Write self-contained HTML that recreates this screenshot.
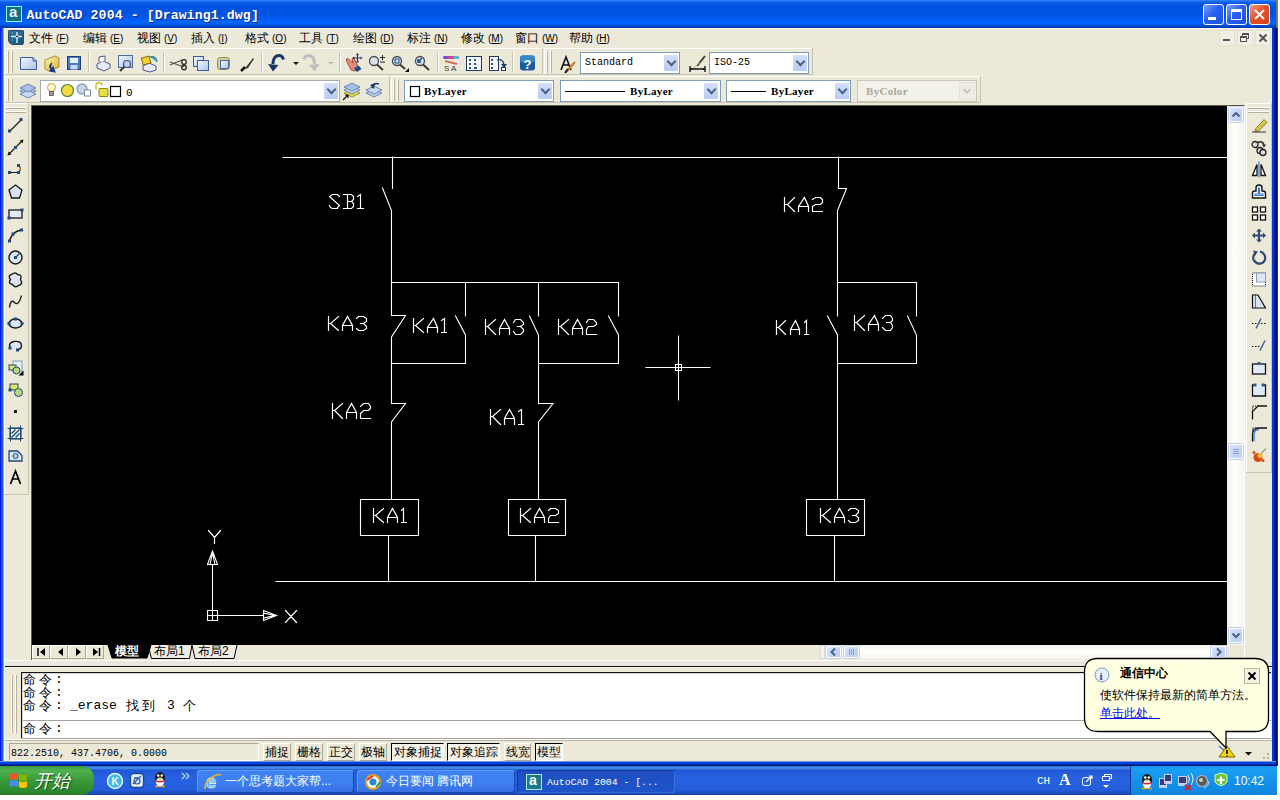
<!DOCTYPE html>
<html><head><meta charset="utf-8"><title>AutoCAD 2004</title>
<style>
*{margin:0;padding:0;box-sizing:border-box}
html,body{width:1280px;height:800px;overflow:hidden;background:#fff;font-family:"Liberation Sans",sans-serif}
.a{position:absolute}
#win{left:0;top:0;width:1276px;height:766px;background:#0040D8}
#title{left:0;top:0;width:1276px;height:28px;background:linear-gradient(#3B8EFF 0px,#1D6FF6 1px,#0A5AE8 3px,#0054E3 6px,#0054E3 14px,#005AF0 18px,#0064FD 22px,#0062F8 24px,#0050D8 25.5px,#003BB4 27px,#003BB4 28px)}
#ttext{left:26.5px;top:8px;font:bold 13.2px/16px "Liberation Mono",monospace;color:#fff;text-shadow:1px 1px 0 #0A2A8A;letter-spacing:0.1px;white-space:pre}
.tbtn{top:4px;width:21px;height:21px;border:1px solid #fff;border-radius:3px;background:linear-gradient(135deg,#7AA2FF,#2A60F0 45%,#1B4FE6)}
#client{left:5px;top:28px;width:1267px;height:733px;background:#ECE9D8}
.menu{top:32px;font:12px/13px "Liberation Sans",sans-serif;color:#000;white-space:pre}
.tb{background:#ECE9D8;border-right:1px solid #C8C4B2;border-bottom:1px solid #C8C4B2;box-shadow:inset 1px 1px 0 #fff}
.grip{width:2px;border-left:1px solid #fff;border-right:1px solid #B6B19C}
.sep{width:2px;border-left:1px solid #C5C2B2;border-right:1px solid #fff}
.combo{background:#fff;border:1px solid #7F9DB9}
.cbtn{background:linear-gradient(#D3DFFB,#B9CCF7);border:1px solid #fff;border-radius:2px}
.cbtn::after{content:"";position:absolute;left:4px;top:3px;width:5px;height:5px;border-right:2px solid #4D6185;border-bottom:2px solid #4D6185;transform:rotate(45deg)}
.ctext{font:10px/12px "Liberation Mono",monospace;color:#000;white-space:pre}
.bl{font:bold 11px/12px "Liberation Serif",serif;letter-spacing:0.3px}
#draw{left:32px;top:106px;width:1195px;height:539px;background:#000}
.sb{background:#F7F6F0}
.sbb{background:linear-gradient(135deg,#D8E3FC,#B8CBF6);border:1px solid #fff;border-radius:2px;box-shadow:0 0 0 1px #C2CFEA}
.st{top:743px;height:18px;font:12px/16px "Liberation Sans",sans-serif;text-align:center;border:1px solid;border-color:#fff #ACA899 #ACA899 #fff;background:#ECE9D8}
.stp{border-color:#000 #fff #fff #000;background:#F3F2EA}
.cmd{font:13px/13px "Liberation Mono",monospace;color:#000;white-space:pre}
.cmdc{font:13px/13px "Liberation Sans",sans-serif;letter-spacing:3px;color:#000;white-space:pre}
#taskbar{left:0;top:766px;width:1277px;height:29px;background:linear-gradient(#3168D5 0,#4993E6 2px,#2157D7 4px,#2663E0 12px,#245DDB 24px,#1941A5 29px)}
.tk{top:770px;height:23px;border-radius:3px;background:linear-gradient(#3C81F3,#3F80F0 50%,#376FE0);box-shadow:inset 1px 1px 0 #5C9BFF,inset -1px -1px 0 #1B44B5;font:12px/23px "Liberation Sans",sans-serif;color:#fff;white-space:pre}
</style></head><body>
<div id="win" class="a"></div>
<div class="a" style="left:0;top:28px;width:5px;height:738px;background:linear-gradient(90deg,#0018C8 0,#0028D8 1px,#2262FF 2px,#1452D8 3px,#F4F8FF 4px)"></div>
<div class="a" style="left:1272px;top:28px;width:6px;height:738px;background:linear-gradient(90deg,#0838DC 0,#0838DC 1.5px,#0020A0 2.5px,#001888 3.5px,#000C50 5px,#5A6070 6px)"></div>
<div class="a" style="left:1276px;top:0;width:2px;height:28px;background:linear-gradient(90deg,#5A7040,#8A9A40)"></div>
<div class="a" style="left:0;top:761px;width:1276px;height:5px;background:linear-gradient(#D8E0F4 0,#0044DC 1px,#0040D8 3px,#001A80 4px,#001870 5px)"></div>
<div id="title" class="a"></div>
<!-- title icon -->
<div class="a" style="left:6px;top:6px;width:16px;height:16px;background:#0E6F86;border:1px solid #9FF0FF"></div>
<div class="a" style="left:9px;top:4px;font:bold 15px/16px 'Liberation Sans',sans-serif;color:#E6F6FA">a</div>
<div id="ttext" class="a">AutoCAD 2004 - [Drawing1.dwg]</div>
<div class="a tbtn" style="left:1203px"></div>
<div class="a tbtn" style="left:1226px"></div>
<div class="a tbtn" style="left:1249px;background:linear-gradient(135deg,#F29A7A,#E0512A 50%,#D23F12)"></div>
<div class="a" style="left:1208px;top:17px;width:8px;height:3px;background:#fff"></div>
<div class="a" style="left:1231px;top:9px;width:11px;height:11px;border:1px solid #fff;border-top-width:3px"></div>
<svg class="a" style="left:1249px;top:4px" width="21" height="21"><path d="M6,6 L15,15 M15,6 L6,15" stroke="#fff" stroke-width="2"/></svg>
<div id="client" class="a"></div>
<div class="a" style="left:5px;top:28px;width:1267px;height:1px;background:#FAFAF6"></div>
<div class="a" style="left:8px;top:30px;width:16px;height:15px;background:linear-gradient(135deg,#2A78A8,#15507A);border:1px solid #3A4A5A;border-radius:1px 1px 2px 5px"></div>
<svg class="a" style="left:8px;top:30px" width="16" height="15"><path d="M9,2 V13 M3,6.5 H14" stroke="#D8F4FF" stroke-width="1.4"/><circle cx="9" cy="6.5" r="1.4" fill="#111" stroke="#fff" stroke-width="0.8"/><path d="M4,3 h1 M4,10 h1 M12,3 h1" stroke="#7AB8D8"/></svg>
<div class="a menu" style="left:29px">文件<span style="font:10px/13px 'Liberation Sans',sans-serif;margin-left:3px">(<u>F</u>)</span></div>
<div class="a menu" style="left:83px">编辑<span style="font:10px/13px 'Liberation Sans',sans-serif;margin-left:3px">(<u>E</u>)</span></div>
<div class="a menu" style="left:137px">视图<span style="font:10px/13px 'Liberation Sans',sans-serif;margin-left:3px">(<u>V</u>)</span></div>
<div class="a menu" style="left:191px">插入<span style="font:10px/13px 'Liberation Sans',sans-serif;margin-left:3px">(<u>I</u>)</span></div>
<div class="a menu" style="left:245px">格式<span style="font:10px/13px 'Liberation Sans',sans-serif;margin-left:3px">(<u>O</u>)</span></div>
<div class="a menu" style="left:299px">工具<span style="font:10px/13px 'Liberation Sans',sans-serif;margin-left:3px">(<u>T</u>)</span></div>
<div class="a menu" style="left:353px">绘图<span style="font:10px/13px 'Liberation Sans',sans-serif;margin-left:3px">(<u>D</u>)</span></div>
<div class="a menu" style="left:407px">标注<span style="font:10px/13px 'Liberation Sans',sans-serif;margin-left:3px">(<u>N</u>)</span></div>
<div class="a menu" style="left:461px">修改<span style="font:10px/13px 'Liberation Sans',sans-serif;margin-left:3px">(<u>M</u>)</span></div>
<div class="a menu" style="left:515px">窗口<span style="font:10px/13px 'Liberation Sans',sans-serif;margin-left:3px">(<u>W</u>)</span></div>
<div class="a menu" style="left:569px">帮助<span style="font:10px/13px 'Liberation Sans',sans-serif;margin-left:3px">(<u>H</u>)</span></div>
<div class="a" style="left:1219px;top:30px;width:16px;height:16px;background:#F1EFE6;border:1px solid #E4E1D6"></div>
<div class="a" style="left:1237px;top:30px;width:16px;height:16px;background:#F1EFE6;border:1px solid #E4E1D6"></div>
<div class="a" style="left:1255px;top:30px;width:16px;height:16px;background:#F1EFE6;border:1px solid #E4E1D6"></div>
<div class="a" style="left:1223px;top:39px;width:7px;height:2px;background:#555"></div>
<div class="a" style="left:1242px;top:33px;width:7px;height:6px;border:1px solid #555;border-top-width:2px"></div>
<div class="a" style="left:1240px;top:36px;width:7px;height:6px;border:1px solid #555;border-top-width:2px;background:#F1EFE6"></div>
<svg class="a" style="left:1255px;top:30px" width="16" height="16"><path d="M4.5,4.5 L11.5,11.5 M11.5,4.5 L4.5,11.5" stroke="#555" stroke-width="2"/></svg>
<!-- toolbar frames -->
<div class="a tb" style="left:5px;top:48px;width:538px;height:27px"></div>
<div class="a tb" style="left:544px;top:48px;width:269px;height:27px"></div>
<div class="a tb" style="left:5px;top:76px;width:385px;height:27px"></div>
<div class="a tb" style="left:391px;top:76px;width:590px;height:27px"></div>
<div class="a grip" style="left:7px;top:51px;height:22px"></div><div class="a grip" style="left:11px;top:51px;height:22px"></div>
<div class="a grip" style="left:546px;top:51px;height:22px"></div><div class="a grip" style="left:550px;top:51px;height:22px"></div>
<div class="a grip" style="left:7px;top:79px;height:22px"></div><div class="a grip" style="left:11px;top:79px;height:22px"></div>
<div class="a grip" style="left:393px;top:79px;height:22px"></div><div class="a grip" style="left:397px;top:79px;height:22px"></div>
<div class="a sep" style="left:88px;top:52px;height:20px"></div>
<div class="a sep" style="left:163px;top:52px;height:20px"></div>
<div class="a sep" style="left:261px;top:52px;height:20px"></div>
<div class="a sep" style="left:339px;top:52px;height:20px"></div>
<div class="a sep" style="left:437px;top:52px;height:20px"></div>
<div class="a sep" style="left:512px;top:52px;height:20px"></div>
<!-- standard toolbar icons -->
<svg class="a" style="left:0;top:48px" width="813" height="28" viewBox="0 48 813 28">
<defs>
<linearGradient id="gb" x1="0" y1="0" x2="1" y2="1"><stop offset="0" stop-color="#F4F8FF"/><stop offset="1" stop-color="#A9C3E6"/></linearGradient>
<linearGradient id="gy" x1="0" y1="0" x2="1" y2="1"><stop offset="0" stop-color="#FFF3A8"/><stop offset="1" stop-color="#D8B43A"/></linearGradient>
</defs>
<!-- new -->
<path d="M20.5,57.5 H33 L36.5,61 V69.5 H20.5 Z" fill="url(#gb)" stroke="#3B5C9A"/>
<path d="M33,57.5 V61 H36.5" fill="none" stroke="#3B5C9A"/>
<!-- open -->
<path d="M45,60 L55,56 L59,58 V67 L49,71 L45,69 Z" fill="url(#gy)" stroke="#A88D3A"/>
<path d="M52,63 Q48,66 51,69 L53,67 L55,72 L50,71 L51,69" fill="#1E3C8C" stroke="#1E3C8C" stroke-width="1.2"/>
<!-- save -->
<rect x="67.5" y="56.5" width="13" height="13" fill="#4C7BC4" stroke="#1F3D7A"/>
<rect x="70" y="58" width="8" height="5" fill="#E8F0FA"/>
<rect x="70.5" y="65" width="7" height="4.5" fill="#C9D8EE"/>
<!-- print -->
<path d="M97,64 L103,61 L110,64 V68 L104,71 L97,68 Z" fill="#E6EAF4" stroke="#4A5A8A"/>
<path d="M99,62 V57 L105,56 V61" fill="#fff" stroke="#4A5A8A"/>
<!-- preview -->
<rect x="118.5" y="55.5" width="14" height="12" fill="url(#gb)" stroke="#4A6AA0"/>
<circle cx="127" cy="64" r="3.5" fill="#B8D0EE" stroke="#4A5A7A" stroke-width="1.2"/>
<path d="M124.5,66.5 L120,71" stroke="#3A3A3A" stroke-width="2"/>
<!-- publish -->
<path d="M143,66 L149,63 L156,66 V70 L150,72 L143,70 Z" fill="#E6EAF4" stroke="#4A5A8A"/>
<rect x="142" y="57" width="8" height="7" fill="#F5D22A" stroke="#8A6A10" transform="rotate(-15 146 60)"/>
<path d="M150,57 Q156,55 157,62" fill="#3FA7C8" stroke="#1E6A8A"/>
<!-- cut -->
<path d="M170,62 L184,67 M170,65 L182,60" stroke="#555" stroke-width="1.2"/>
<circle cx="184" cy="62" r="2.3" fill="none" stroke="#222" stroke-width="1.2"/><circle cx="184" cy="67.5" r="2.3" fill="none" stroke="#222" stroke-width="1.2"/>
<!-- copy -->
<rect x="193.5" y="56.5" width="10" height="10" fill="url(#gb)" stroke="#3B5C9A"/>
<rect x="197.5" y="60.5" width="11" height="10" fill="url(#gb)" stroke="#3B5C9A"/>
<!-- paste -->
<rect x="217.5" y="57.5" width="12" height="12" rx="3" fill="#D8D0A0" stroke="#8C8A4A"/>
<rect x="220.5" y="60.5" width="8" height="8" fill="url(#gb)" stroke="#4C6A9A"/>
<!-- match prop brush -->
<path d="M242,70 L246,67 L253,58 L254,59 L248,68 Z" fill="#3A3A3A"/>
<path d="M241,71 L245,67" stroke="#111" stroke-width="2.5"/>
<!-- undo -->
<path d="M283.5,59.5 Q282,54 276.5,56 Q273,58 273,64" fill="none" stroke="#1A3468" stroke-width="3"/>
<path d="M268,64 L278.5,65 L273,71.5 Z" fill="#1A3468"/>
<path d="M293,62 H299 L296,65 Z" fill="#111"/>
<!-- redo -->
<path d="M304,59.5 Q305.5,54 311,56 Q314.5,58 314.5,64" fill="none" stroke="#BDBDBD" stroke-width="3"/>
<path d="M309,65 L319.5,64 L314.5,71.5 Z" fill="#BDBDBD"/>
<path d="M328,62 H334 L331,65 Z" fill="#BBB"/>
<!-- pan -->
<path d="M346.5,61 Q346,58 348,58.5 L353,63 L352,59 Q352,57.5 353.5,58 L357,64 L358,68 L355,71 L351,70 Z" fill="#E08C78" stroke="#A04A3A" stroke-width="0.9"/>
<path d="M354,68.5 L358.5,65.5 L361.5,69 L357,72 Z" fill="#1E4A8A"/>
<path d="M357.5,54 V62 M353.5,58 H361.5" stroke="#1E3A6A" stroke-width="1.2"/>
<path d="M357.5,53 L356,55 H359Z M357.5,63 L356,61 H359Z M352.5,58 L354.5,56.5 V59.5Z M362.5,58 L360.5,56.5 V59.5Z" fill="#1E3A6A"/>
<!-- zoom realtime -->
<circle cx="374" cy="61" r="4.5" fill="#D6E4F2" stroke="#4A4A4A" stroke-width="1.3"/>
<path d="M377,64.5 L383,70" stroke="#3A3A3A" stroke-width="2"/>
<path d="M380,57.5 H385 M382.5,55 V60 M380,62 H385" stroke="#222" stroke-width="1"/>
<!-- zoom window -->
<circle cx="397" cy="61" r="4.5" fill="#CFE0F0" stroke="#4A4A4A" stroke-width="1.3"/>
<rect x="395" y="59" width="4" height="4" fill="none" stroke="#1E4A8A"/>
<path d="M400,64.5 L405,69" stroke="#3A3A3A" stroke-width="2"/><path d="M405,72 L409,68 V72 Z" fill="#000"/>
<!-- zoom prev -->
<circle cx="420" cy="61" r="4.5" fill="#CFE0F0" stroke="#4A4A4A" stroke-width="1.3"/>
<path d="M418,62 L422,58 M418,59 V62 H421" stroke="#1E3C8C" stroke-width="1.4" fill="none"/>
<path d="M423,64.5 L429,70" stroke="#3A3A3A" stroke-width="2"/>
<!-- properties -->
<rect x="443.5" y="56" width="15" height="3" fill="#E0407A"/><rect x="443.5" y="56" width="5" height="3" fill="#7A4AE0"/><rect x="453.5" y="56" width="5" height="3" fill="#40C0E0"/>
<path d="M445,61 L457,64" stroke="#D27060" stroke-width="2"/>
<text x="444" y="71" font-family="Liberation Sans" font-size="8" fill="#333">S A</text>
<!-- design center -->
<rect x="466.5" y="56.5" width="15" height="14" fill="#F6F8FC" stroke="#1F3A6A"/>
<path d="M469,59 h2 v2 h-2z M474,59 h2 v2 h-2z M469,63 h2 v2 h-2z M474,63 h2 v2 h-2z M469,67 h2 v2 h-2z M474,67 h3 v2 h-3z" fill="#2E4E8A"/>
<!-- tool palettes -->
<rect x="489.5" y="56.5" width="9" height="14" fill="#F6F8FC" stroke="#1F3A6A"/>
<path d="M491,59 h2 v2 h-2z M491,63 h2 v2 h-2z M491,67 h2 v2 h-2z" fill="#2E4E8A"/>
<path d="M497,60 Q503,58 504,65" fill="none" stroke="#1F3A6A" stroke-width="1.3"/><path d="M501,64 H507 L504,68 Z" fill="#1F3A6A"/>
<rect x="501.5" y="67.5" width="4" height="3" fill="#fff" stroke="#1F3A6A"/>
<!-- help -->
<rect x="520" y="55.5" width="15" height="15" rx="3" fill="#1E5A9E"/>
<rect x="520" y="55.5" width="15" height="7" rx="3" fill="#3A84C8"/>
<text x="523.5" y="68.5" font-family="Liberation Sans" font-weight="bold" font-size="13" fill="#fff">?</text>
<!-- text style icon -->
<path d="M561,70 L566,57 L571,70 M563,65 H569" stroke="#111" stroke-width="1.6" fill="none"/>
<path d="M566,72 L575,62" stroke="#C87A2A" stroke-width="2.2"/><path d="M565,73 L568,69" stroke="#222" stroke-width="2"/>
<!-- dim style icon -->
<path d="M690,69 H705 M690,66 V72 M705,66 V72" stroke="#111" stroke-width="1.4"/>
<path d="M691,68 L693,69 L691,70 Z M704,68 L702,69 L704,70 Z" fill="#111"/>
<path d="M697,66 L705,56" stroke="#3A3A3A" stroke-width="2"/><path d="M694,68 L700,62" stroke="#C8A060" stroke-width="1"/>
</svg>
<!-- combos strip 1 -->
<div class="a combo" style="left:580px;top:52px;width:100px;height:22px"></div>
<div class="a ctext" style="left:585px;top:57px">Standard</div>
<div class="a cbtn" style="left:663px;top:54px;width:16px;height:18px"></div>
<div class="a combo" style="left:709px;top:52px;width:100px;height:22px"></div>
<div class="a ctext" style="left:714px;top:57px">ISO-25</div>
<div class="a cbtn" style="left:792px;top:54px;width:16px;height:18px"></div>
<!-- layers toolbar -->
<svg class="a" style="left:0;top:76px" width="980" height="28" viewBox="0 76 980 28">
<path d="M20,91 L28,87 L36,91 L28,95 Z" fill="#B8CCE8" stroke="#6A88B8"/>
<path d="M20,94 L28,90 L36,94 L28,98 Z" fill="#C8D8F0" stroke="#6A88B8"/>
<path d="M20,88 L28,84 L36,88 L28,92 Z" fill="#A8C0E4" stroke="#6A88B8"/>
<!-- layer prev icons -->
<path d="M344,93 L352,89 L360,93 L352,97 Z" fill="#E8D840" stroke="#9A9A30"/>
<path d="M344,90 L352,86 L360,90 L352,94 Z" fill="#C0D0E8" stroke="#6A88B8"/>
<path d="M344,87 L352,83 L360,87 L352,91 Z" fill="#A8C0E4" stroke="#6A88B8"/>
<path d="M343,100 L348,95 M345,95 H348 V98" stroke="#111" stroke-width="1.2" fill="none"/>
<path d="M366,93 L374,89 L382,93 L374,97 Z" fill="#B8CCE8" stroke="#6A88B8"/>
<path d="M366,90 L374,86 L382,90 L374,94 Z" fill="#C8D8F0" stroke="#6A88B8"/>
<path d="M372,88 Q374,82 379,84" fill="none" stroke="#1F3A6A" stroke-width="1.5"/><path d="M370,85 L374,89 L375,83 Z" fill="#1F3A6A"/>
<!-- color square -->
<rect x="410.5" y="86.5" width="9" height="10" fill="#fff" stroke="#000" stroke-width="1.2"/>
<path d="M565,91.5 H625 M731,91.5 H766" stroke="#000" stroke-width="1.3"/>
</svg>
<div class="a combo" style="left:40px;top:80px;width:300px;height:22px;border-color:#A5ACB2"></div>
<svg class="a" style="left:40px;top:80px" width="100" height="22" viewBox="40 80 100 22">
<g transform="translate(0,1.5)">
<circle cx="51.5" cy="86" r="4" fill="#FFFBC8" stroke="#B8A64A"/>
<rect x="49.5" y="90" width="4" height="4" fill="#999" stroke="#555" stroke-width="0.8"/>
<circle cx="67.5" cy="89" r="6" fill="#F5DA40" stroke="#4A8A3A" stroke-width="1.2"/>
<circle cx="82" cy="87.5" r="5" fill="#C8D4E0" stroke="#8AA0B8" stroke-width="1.3"/>
<rect x="84.5" y="88.5" width="6" height="6" fill="#fff" stroke="#7A8AA0"/>
<path d="M96,88 V84 Q96,81 99,81 Q102,81 102,84" fill="none" stroke="#C8C020" stroke-width="1.4"/>
<rect x="99" y="87" width="9" height="8" rx="1" fill="#E8E040" stroke="#8A8A10"/>
</g>
<rect x="110.5" y="86.5" width="10" height="10" fill="#fff" stroke="#000" stroke-width="1.2"/>
<text x="126" y="95.5" font-family="Liberation Mono" font-size="11" fill="#000">0</text>
</svg>
<div class="a cbtn" style="left:323px;top:82px;width:16px;height:18px"></div>
<div class="a combo" style="left:404px;top:80px;width:150px;height:22px"></div>
<svg class="a" style="left:404px;top:80px" width="30" height="22"><rect x="6.5" y="6.5" width="9" height="10" fill="#fff" stroke="#000" stroke-width="1.2"/></svg>
<div class="a ctext bl" style="left:424px;top:85px">ByLayer</div>
<div class="a cbtn" style="left:537px;top:82px;width:16px;height:18px"></div>
<div class="a combo" style="left:560px;top:80px;width:161px;height:22px"></div>
<div class="a" style="left:565px;top:91px;width:60px;height:1px;background:#000"></div>
<div class="a ctext bl" style="left:630px;top:85px">ByLayer</div>
<div class="a cbtn" style="left:703px;top:82px;width:16px;height:18px"></div>
<div class="a combo" style="left:726px;top:80px;width:125px;height:22px"></div>
<div class="a" style="left:731px;top:91px;width:35px;height:1px;background:#000"></div>
<div class="a ctext bl" style="left:771px;top:85px">ByLayer</div>
<div class="a cbtn" style="left:834px;top:82px;width:16px;height:18px"></div>
<div class="a combo" style="left:857px;top:80px;width:120px;height:22px;background:#F2F1EA;border-color:#C9C7BA"></div>
<div class="a ctext bl" style="left:866px;top:85px;color:#ACA899">ByColor</div>
<div class="a" style="left:959px;top:82px;width:16px;height:18px;background:#EEEDE5;border:1px solid #E5E3DA"></div><svg class="a" style="left:959px;top:82px" width="16" height="18"><path d="M4.5,7 L8,10.5 L11.5,7" fill="none" stroke="#C9C7BA" stroke-width="2"/></svg>

<div class="a tb" style="left:4px;top:103px;width:25px;height:392px"></div>
<div class="a" style="left:6px;top:107px;width:20px;height:2px;border-top:1px solid #fff;border-bottom:1px solid #B6B19C"></div>
<div class="a" style="left:6px;top:111px;width:20px;height:2px;border-top:1px solid #fff;border-bottom:1px solid #B6B19C"></div>
<div class="a tb" style="left:1246px;top:103px;width:26px;height:370px"></div>
<div class="a" style="left:1248px;top:107px;width:21px;height:2px;border-top:1px solid #fff;border-bottom:1px solid #B6B19C"></div>
<div class="a" style="left:1248px;top:111px;width:21px;height:2px;border-top:1px solid #fff;border-bottom:1px solid #B6B19C"></div>
<div class="a" style="left:31px;top:105px;width:1214px;height:556px;border:1px solid;border-color:#5E5C52 #fff #fff #5E5C52"></div>
<div id="draw" class="a"></div>
<svg class="a" style="left:32px;top:106px" width="1195" height="539" viewBox="32 106 1195 539"><g fill="none" stroke="#fff" stroke-width="1.1" stroke-linecap="square" stroke-linejoin="miter"><path d="M283,157.5 L1227,157.5M276,581.5 L1227,581.5M392.5,157 L392.5,188.5M382.5,188 L391.5,210.5 L391.5,282.5M391.5,282.5 L618.5,282.5M391.5,282.5 L391.5,315.5 L405.5,315.5 L391.5,337 L391.5,403.5 L405.5,403.5 L391.5,422 L391.5,499.5M465.5,282.5 L465.5,316M455.5,316 L465.5,335 L465.5,363.5 L391.5,363.5M538.5,282.5 L538.5,316M529.5,316 L538.5,335 L538.5,403.5 L553,403.5 L538.5,422 L538.5,499.5M618.5,282.5 L618.5,316M608.5,316 L618.5,335 L618.5,363.5 L538.5,363.5M360.5,499.5 L418.5,499.5 L418.5,535.5 L360.5,535.5 L360.5,499.5M388.5,535.5 L388.5,581.5M508.5,499.5 L565.5,499.5 L565.5,535.5 L508.5,535.5 L508.5,499.5M535.5,535.5 L535.5,581.5M806.5,499.5 L864.5,499.5 L864.5,535.5 L806.5,535.5 L806.5,499.5M834.5,535.5 L834.5,581.5M838.5,157 L838.5,188.5 L846.5,188.5 L837.5,210.5 L837.5,282.5M837.5,282.5 L916.5,282.5 L916.5,316M837.5,282.5 L837.5,316M827.5,316 L837.5,335 L837.5,499.5M907.5,316 L916.5,335 L916.5,363.5 L837.5,363.5M678.5,336 L678.5,400M646,367.5 L710,367.5M675.5,364.5 L681.5,364.5 L681.5,370.5 L675.5,370.5 L675.5,364.5M207.5,610.5 L217.5,610.5 L217.5,620.5 L207.5,620.5 L207.5,610.5M212.5,610.5 L212.5,620.5M207.5,615.5 L217.5,615.5M212.5,610.5 L212.5,564.5M207.5,564.5 L217.5,564.5 L212.5,551 L207.5,564.5M210,564.5 L212.5,553M215,564.5 L212.5,553M217.5,615.5 L263.5,615.5M263.5,610.5 L263.5,620.5 L276.5,615.5 L263.5,610.5M263.5,613 L275,615.5M263.5,618 L275,615.5"/><path d="M339.5,196.5L337.5,194.5L332.5,194.5L329.5,196.5L339.5,205.5L337.5,207.5L337.5,208.5L332.5,208.5L330.5,207.5L329.5,205.5M343.5,194.5L351.5,194.5L353.5,196.5L353.5,199.5L351.5,201.5L347.5,201.5M347.5,194.5L347.5,208.5M351.5,201.5L353.5,203.5L353.5,206.5L351.5,208.5L343.5,208.5M357.5,196.5L360.5,194.5L360.5,208.5M357.5,208.5L363.5,208.5M328.5,330.5L328.5,316.5M338.5,316.5L330.5,323.5L338.5,330.5M328.5,323.5L330.5,323.5M342.5,330.5L342.5,325.5L347.5,316.5L352.5,325.5L352.5,330.5M342.5,325.5L352.5,325.5M356.5,318.5L358.5,316.5L363.5,316.5L366.5,318.5L366.5,321.5L363.5,323.5L360.5,323.5M363.5,323.5L366.5,326.5L366.5,328.5L363.5,330.5L358.5,330.5L356.5,328.5M413.5,332.5L413.5,318.5M423.5,318.5L415.5,325.5L423.5,332.5M413.5,325.5L415.5,325.5M427.5,332.5L427.5,327.5L433.5,318.5L437.5,327.5L437.5,332.5M427.5,327.5L437.5,327.5M441.5,320.5L444.5,318.5L444.5,332.5M441.5,332.5L446.5,332.5M485.5,334.5L485.5,319.5M495.5,319.5L487.5,326.5L495.5,334.5M485.5,326.5L487.5,326.5M499.5,334.5L499.5,328.5L504.5,319.5L509.5,328.5L509.5,334.5M499.5,328.5L509.5,328.5M513.5,322.5L515.5,319.5L520.5,319.5L523.5,322.5L523.5,324.5L520.5,326.5L517.5,326.5M520.5,326.5L523.5,329.5L523.5,331.5L520.5,334.5L515.5,334.5L513.5,331.5M558.5,334.5L558.5,319.5M568.5,319.5L560.5,326.5L568.5,334.5M558.5,326.5L560.5,326.5M572.5,334.5L572.5,328.5L577.5,319.5L582.5,328.5L582.5,334.5M572.5,328.5L582.5,328.5M586.5,322.5L588.5,319.5L593.5,319.5L596.5,322.5L596.5,324.5L593.5,326.5L588.5,326.5L586.5,329.5L586.5,334.5L596.5,334.5M332.5,418.5L332.5,403.5M342.5,403.5L334.5,410.5L342.5,418.5M332.5,410.5L334.5,410.5M346.5,418.5L346.5,412.5L351.5,403.5L356.5,412.5L356.5,418.5M346.5,412.5L356.5,412.5M360.5,406.5L363.5,403.5L368.5,403.5L370.5,406.5L370.5,408.5L368.5,410.5L363.5,410.5L360.5,413.5L360.5,418.5L370.5,418.5M490.5,424.5L490.5,409.5M500.5,409.5L492.5,416.5L500.5,424.5M490.5,416.5L492.5,416.5M504.5,424.5L504.5,418.5L509.5,409.5L514.5,418.5L514.5,424.5M504.5,418.5L514.5,418.5M518.5,411.5L521.5,409.5L521.5,424.5M518.5,424.5L523.5,424.5M373.5,522.5L373.5,508.5M383.5,508.5L375.5,515.5L383.5,522.5M373.5,515.5L375.5,515.5M387.5,522.5L387.5,517.5L392.5,508.5L397.5,517.5L397.5,522.5M387.5,517.5L397.5,517.5M401.5,510.5L403.5,508.5L403.5,522.5M401.5,522.5L406.5,522.5M520.5,522.5L520.5,508.5M530.5,508.5L522.5,515.5L530.5,522.5M520.5,515.5L522.5,515.5M534.5,522.5L534.5,517.5L539.5,508.5L544.5,517.5L544.5,522.5M534.5,517.5L544.5,517.5M548.5,510.5L550.5,508.5L555.5,508.5L558.5,510.5L558.5,513.5L555.5,515.5L550.5,515.5L548.5,518.5L548.5,522.5L558.5,522.5M820.5,522.5L820.5,508.5M830.5,508.5L822.5,515.5L830.5,522.5M820.5,515.5L822.5,515.5M834.5,522.5L834.5,517.5L839.5,508.5L844.5,517.5L844.5,522.5M834.5,517.5L844.5,517.5M848.5,510.5L850.5,508.5L855.5,508.5L858.5,510.5L858.5,512.5L855.5,515.5L852.5,515.5M855.5,515.5L858.5,517.5L858.5,520.5L855.5,522.5L850.5,522.5L848.5,520.5M784.5,211.5L784.5,197.5M794.5,197.5L787.5,204.5L794.5,211.5M784.5,204.5L787.5,204.5M798.5,211.5L798.5,206.5L804.5,197.5L808.5,206.5L808.5,211.5M798.5,206.5L808.5,206.5M812.5,199.5L815.5,197.5L820.5,197.5L822.5,199.5L822.5,202.5L820.5,204.5L815.5,204.5L812.5,206.5L812.5,211.5L822.5,211.5M776.5,334.5L776.5,320.5M785.5,320.5L778.5,327.5L785.5,334.5M776.5,327.5L778.5,327.5M790.5,334.5L790.5,329.5L795.5,320.5L799.5,329.5L799.5,334.5M790.5,329.5L799.5,329.5M804.5,322.5L806.5,320.5L806.5,334.5M804.5,334.5L808.5,334.5M854.5,330.5L854.5,315.5M864.5,315.5L856.5,322.5L864.5,330.5M854.5,322.5L856.5,322.5M868.5,330.5L868.5,324.5L874.5,315.5L878.5,324.5L878.5,330.5M868.5,324.5L878.5,324.5M882.5,318.5L885.5,315.5L890.5,315.5L892.5,318.5L892.5,320.5L890.5,322.5L886.5,322.5M890.5,322.5L892.5,325.5L892.5,327.5L890.5,330.5L885.5,330.5L882.5,327.5M285.5,622.5L296.5,610.5M285.5,610.5L296.5,622.5M208.5,530.5L214.5,537.5L220.5,530.5M214.5,537.5L214.5,543.5" stroke-width="1.2"/></g></svg>
<div class="a sb" style="left:1227px;top:106px;width:17px;height:539px;background:linear-gradient(90deg,#F3F1EC,#FEFEFB 40%,#F6F5EF)"></div>
<div class="a sbb" style="left:1229px;top:107px;width:14px;height:15px"></div>
<div class="a sbb" style="left:1229px;top:628px;width:14px;height:15px"></div>
<svg class="a" style="left:1229px;top:107px" width="14" height="15"><path d="M3.5,9.5 L7,6 L10.5,9.5" fill="none" stroke="#4D6185" stroke-width="2"/></svg>
<svg class="a" style="left:1229px;top:628px" width="14" height="15"><path d="M3.5,5.5 L7,9 L10.5,5.5" fill="none" stroke="#4D6185" stroke-width="2"/></svg>
<div class="a sbb" style="left:1229px;top:444px;width:14px;height:15px"></div>
<svg class="a" style="left:1229px;top:444px" width="14" height="15"><path d="M4,5.5 H10 M4,7.5 H10 M4,9.5 H10" stroke="#8AA0D8" stroke-width="1"/></svg>
<div class="a" style="left:32px;top:645px;width:1195px;height:14px;background:#ECE9D8"></div>
<div class="a" style="left:32px;top:645px;width:18px;height:14px;background:#ECE9D8;border:1px solid;border-color:#fff #ACA899 #ACA899 #fff"></div>
<div class="a" style="left:50px;top:645px;width:18px;height:14px;background:#ECE9D8;border:1px solid;border-color:#fff #ACA899 #ACA899 #fff"></div>
<div class="a" style="left:68px;top:645px;width:18px;height:14px;background:#ECE9D8;border:1px solid;border-color:#fff #ACA899 #ACA899 #fff"></div>
<div class="a" style="left:86px;top:645px;width:18px;height:14px;background:#ECE9D8;border:1px solid;border-color:#fff #ACA899 #ACA899 #fff"></div>
<svg class="a" style="left:32px;top:645px" width="72" height="14"><path d="M6,3 V11" stroke="#000" stroke-width="1.5"/><path d="M13,3 L8,7 L13,11Z M31,3 L26,7 L31,11Z M44,3 L49,7 L44,11Z M61,3 L66,7 L61,11Z" fill="#000"/><path d="M67.5,3 V11" stroke="#000" stroke-width="1.5"/></svg>
<svg class="a" style="left:104px;top:644px" width="140" height="16"><path d="M44,1 L47.5,14.5 H85.5 L88,1" fill="#EFEDE3" stroke="#000"/><path d="M88,1 L91,14.5 H130 L133,1" fill="#EFEDE3" stroke="#000"/><path d="M4,1 L8,14 H43 L47,1 Z" fill="#000" stroke="#000"/></svg>
<div class="a" style="left:115px;top:645px;font:bold 12px/13px 'Liberation Sans',sans-serif;color:#fff">模型</div>
<div class="a" style="left:154px;top:645px;font:12px/13px 'Liberation Sans',sans-serif;color:#000">布局1</div>
<div class="a" style="left:198px;top:645px;font:12px/13px 'Liberation Sans',sans-serif;color:#000">布局2</div>
<div class="a" style="left:826px;top:645px;width:401px;height:14px;background:linear-gradient(#F3F1EC,#FEFEFB 40%,#F6F5EF)"></div>
<div class="a" style="left:820px;top:645px;width:5px;height:14px;background:#F3F2EC;border:1px solid #DDD"></div>
<div class="a sbb" style="left:826px;top:646px;width:15px;height:12px"></div>
<div class="a sbb" style="left:844px;top:646px;width:15px;height:12px"></div>
<div class="a sbb" style="left:1211px;top:646px;width:15px;height:12px"></div>
<svg class="a" style="left:826px;top:646px" width="15" height="12"><path d="M9,2.5 L5.5,6 L9,9.5" fill="none" stroke="#4D6185" stroke-width="2"/></svg>
<svg class="a" style="left:844px;top:646px" width="15" height="12"><path d="M5.5,3 V9 M7.5,3 V9 M9.5,3 V9" stroke="#8AA0D8" stroke-width="1"/></svg>
<svg class="a" style="left:1211px;top:646px" width="15" height="12"><path d="M6,2.5 L9.5,6 L6,9.5" fill="none" stroke="#4D6185" stroke-width="2"/></svg>
<svg class="a" style="left:4px;top:103px" width="25" height="392" viewBox="4 103 25 392"><g transform="translate(7.5,117.5)"><path d="M2,14 L14,2" stroke="#1A1A1A" stroke-width="1.3"/><rect x="0.5" y="12" width="3" height="3" fill="#1F4A7A"/><rect x="12" y="0.5" width="3" height="3" fill="#1F4A7A"/></g><g transform="translate(7.5,139.5)"><path d="M1,15 L15,1" stroke="#1A1A1A" stroke-width="1.3"/><path d="M0,16 L4,15 L1,12Z M16,0 L12,1 L15,4Z" fill="#1A1A1A"/><rect x="6.5" y="6.5" width="3" height="3" fill="#1F4A7A"/></g><g transform="translate(7.5,161.5)"><path d="M2,11 H11 Q15,7 11,4" stroke="#1A1A1A" stroke-width="1.2" fill="none"/><path d="M11,4 Q15,7 11,11" stroke="#C87A2A" fill="none"/><rect x="0.5" y="9.5" width="3" height="3" fill="#1F4A7A"/><rect x="9.5" y="9.5" width="3" height="3" fill="#1F4A7A"/><rect x="9.5" y="2.5" width="3" height="3" fill="#1F4A7A"/></g><g transform="translate(7.5,183.5)"><path d="M8,1.5 L14.5,6.5 L12,14.5 H4 L1.5,6.5 Z" fill="#D8E2F2" stroke="#1A1A1A" stroke-width="1.3"/></g><g transform="translate(7.5,205.5)"><rect x="1.5" y="4.5" width="13" height="8" fill="#E2EAF6" stroke="#1A1A1A" stroke-width="1.3"/><rect x="0" y="11" width="3" height="3" fill="#1F4A7A"/><rect x="13" y="3" width="3" height="3" fill="#1F4A7A"/></g><g transform="translate(7.5,227.5)"><path d="M2,14 Q4,4 14,2.5" stroke="#1A1A1A" stroke-width="1.3" fill="none"/><rect x="0.5" y="12" width="3" height="3" fill="#1F4A7A"/><rect x="4" y="5" width="3" height="3" fill="#1F4A7A"/><rect x="12.5" y="1" width="3" height="3" fill="#1F4A7A"/></g><g transform="translate(7.5,249.5)"><circle cx="8" cy="8" r="6.5" fill="#DDE6F4" stroke="#1A1A1A" stroke-width="1.4"/><path d="M8,8 L12,4" stroke="#1F4A7A" stroke-width="1.3"/><rect x="6.5" y="6.5" width="3" height="3" fill="#1F4A7A"/></g><g transform="translate(7.5,271.5)"><path d="M4,3 Q8,0 10,3 Q15,3 13,8 Q16,13 11,14 Q8,17 5,13 Q0,12 3,8 Q0,4 4,3Z" fill="#DDE6F4" stroke="#1A1A1A" stroke-width="1.4"/></g><g transform="translate(7.5,293.5)"><path d="M2,14 Q3,5 7,9 Q11,13 14,2" stroke="#1A1A1A" stroke-width="1.3" fill="none"/></g><g transform="translate(7.5,315.5)"><ellipse cx="8" cy="8" rx="6.5" ry="4.5" fill="#DDE6F4" stroke="#1A1A1A" stroke-width="1.4"/><rect x="0" y="6.5" width="3" height="3" fill="#1F4A7A"/><rect x="13" y="6.5" width="3" height="3" fill="#1F4A7A"/><rect x="6.5" y="2" width="3" height="3" fill="#1F4A7A"/></g><g transform="translate(7.5,337.5)"><path d="M3,11 Q0,6 6,4 Q14,3 14,8 Q14,12 10,12" stroke="#1A1A1A" stroke-width="1.4" fill="#DDE6F4"/><rect x="1" y="9" width="3" height="3" fill="#1F4A7A"/><rect x="8.5" y="11" width="3" height="3" fill="#1F4A7A"/></g><g transform="translate(7.5,359.5)"><rect x="5.5" y="1.5" width="9" height="11" fill="#E8EEF6" stroke="#8A9AB0"/><rect x="1.5" y="5.5" width="7" height="5" fill="#D8E860" stroke="#1F4A7A"/><circle cx="9" cy="11" r="3.5" fill="#B8D880" stroke="#1F4A7A"/><path d="M11,16 L16,11 V16Z" fill="#000"/></g><g transform="translate(7.5,381.5)"><rect x="2.5" y="2.5" width="8" height="6" fill="#D8E860" stroke="#1F4A7A"/><circle cx="11" cy="11" r="4" fill="#B8D880" stroke="#1F4A7A"/><rect x="1" y="7" width="3" height="3" fill="#1F4A7A"/></g><g transform="translate(7.5,403.5)"><rect x="6.5" y="6.5" width="3" height="3" fill="#1A1A1A"/></g><g transform="translate(7.5,425.5)"><rect x="2.5" y="2.5" width="11" height="11" fill="#fff" stroke="#1F4A7A" stroke-width="1.2"/><path d="M0,3 H16 M0,13 H16 M3,0 V16 M13,0 V16" stroke="#1F4A7A"/><path d="M4,8 L8,4 M4,12 L12,4 M8,12 L12,8" stroke="#1F4A7A" stroke-width="1.5"/></g><g transform="translate(7.5,447.5)"><path d="M1.5,3.5 H10 L14.5,8 V13.5 H1.5 Z" fill="#D8E4F2" stroke="#1F4A7A" stroke-width="1.3"/><circle cx="8" cy="8.5" r="2.5" fill="#B8CCE4" stroke="#1F4A7A"/></g><g transform="translate(7.5,469.5)"><path d="M3,14.5 L8,1.5 L13,14.5 M5,9.5 H11" stroke="#000" stroke-width="1.7" fill="none"/></g></svg>
<svg class="a" style="left:1246px;top:103px" width="26" height="370" viewBox="1246 103 26 370"><g transform="translate(1251,117.5)"><path d="M4,12 L13,2 L16,5 L7,14 Z" fill="#D8C840" stroke="#6A6A30" stroke-width="0.8"/><path d="M4,12 L7,14 L5,15 L3,14Z" fill="#C88080"/><path d="M1,14.5 H15" stroke="#333"/></g><g transform="translate(1251,139.5)"><circle cx="4" cy="5" r="3" fill="#DDD" stroke="#222" stroke-width="1.3"/><circle cx="9" cy="11" r="3" fill="#DDD" stroke="#222" stroke-width="1.3"/><circle cx="12" cy="13" r="3" fill="#DDD" stroke="#222" stroke-width="1.3"/><path d="M7,3 Q11,1 13,5" fill="none" stroke="#222" stroke-width="1.5"/><path d="M11,5 H15 L13,8Z" fill="#222"/></g><g transform="translate(1251,161.5)"><path d="M1.5,14 L6,3 V14Z M14.5,14 L10,3 V14Z" fill="#fff" stroke="#111" stroke-width="1.3"/><path d="M8,0 V16" stroke="#3A7AD8" stroke-width="1.2"/></g><g transform="translate(1251,183.5)"><path d="M1.5,14.5 V9.5 Q1.5,7.5 4,7.5 H5 V4.5 Q5,1.5 8,1.5 Q11,1.5 11,4.5 V7.5 H12 Q14.5,7.5 14.5,10 V14.5 Z" fill="#fff" stroke="#111" stroke-width="1.4"/><path d="M4,12 V10.5 H7.5 V5 Q8,3.5 8.5,5 V10.5 H12 V12 Z" fill="none" stroke="#3A7AD8" stroke-width="1.2"/></g><g transform="translate(1251,205.5)"><rect x="1.5" y="1.5" width="5" height="5" fill="#fff" stroke="#111" stroke-width="1.3"/><rect x="9.5" y="1.5" width="5" height="5" fill="#fff" stroke="#111" stroke-width="1.3"/><rect x="1.5" y="9.5" width="5" height="5" fill="#fff" stroke="#111" stroke-width="1.3"/><rect x="9.5" y="9.5" width="5" height="5" fill="#fff" stroke="#111" stroke-width="1.3"/></g><g transform="translate(1251,227.5)"><path d="M8,1 L11,4 H9 V7 H12 V5 L15,8 L12,11 V9 H9 V12 H11 L8,15 L5,12 H7 V9 H4 V11 L1,8 L4,5 V7 H7 V4 H5 Z" fill="#2F4A78"/></g><g transform="translate(1251,249.5)"><path d="M4,4 Q1,8 3,11 Q6,15 10,14 Q15,12 14,7 Q13,3 9,2" fill="none" stroke="#2F4A78" stroke-width="2.2"/><path d="M2,1 L7,2 L4,6Z" fill="#2F4A78"/></g><g transform="translate(1251,271.5)"><rect x="1.5" y="1.5" width="13" height="13" fill="#fff" stroke="#111" stroke-dasharray="1,1"/><rect x="5.5" y="1.5" width="9" height="9" fill="#DDE6F4" stroke="#8AA0C0"/></g><g transform="translate(1251,293.5)"><path d="M1.5,1.5 H7 L14.5,14.5 H1.5 Z" fill="#D8E4F2" stroke="#111" stroke-width="1.2"/><path d="M4.5,1 V15" stroke="#111" stroke-dasharray="1,1"/></g><g transform="translate(1251,315.5)"><path d="M1,8 H15" stroke="#111" stroke-dasharray="1.5,1.5"/><path d="M5,13 L10,3" stroke="#3A5A9A" stroke-width="1.4"/></g><g transform="translate(1251,337.5)"><path d="M1,9 H9" stroke="#111" stroke-dasharray="1.5,1.5"/><path d="M9,13 L14,3" stroke="#3A5A9A" stroke-width="1.4"/></g><g transform="translate(1251,359.5)"><rect x="1.5" y="4.5" width="13" height="10" fill="#E2EAF6" stroke="#111" stroke-width="1.3"/><rect x="6.5" y="2.5" width="3" height="3" fill="#3A5A9A"/></g><g transform="translate(1251,381.5)"><path d="M4,3.5 H1.5 V14.5 H14.5 V3.5 H12" fill="#E2EAF6" stroke="#111" stroke-width="1.3"/><rect x="2.5" y="2" width="3" height="3" fill="#3A5A9A"/><rect x="10.5" y="2" width="3" height="3" fill="#3A5A9A"/></g><g transform="translate(1251,403.5)"><path d="M1.5,16 V8 L7,2.5 H16" fill="none" stroke="#111" stroke-width="1.3"/><path d="M1.5,8 V2.5 H7" fill="none" stroke="#111" stroke-dasharray="1,1"/></g><g transform="translate(1251,425.5)"><path d="M1.5,16 V9 Q1.5,2.5 8,2.5 H16" fill="none" stroke="#111" stroke-width="1.3"/><path d="M3,16 V9 Q3,4 8,4" fill="none" stroke="#3A7AD8" stroke-width="1.3"/><path d="M1.5,8 V2.5 H7" fill="none" stroke="#111" stroke-dasharray="1,1"/></g><g transform="translate(1251,447.5)"><circle cx="7" cy="10" r="4.5" fill="#D84A1A"/><circle cx="9" cy="8" r="2.5" fill="#F5C030"/><path d="M10,6 L15,1" stroke="#999" stroke-width="1.2"/><circle cx="3" cy="5" r="1.5" fill="#D84A1A"/><circle cx="12" cy="13" r="1.5" fill="#D84A1A"/></g></svg>
<!-- separator -->
<div class="a" style="left:5px;top:661px;width:1267px;height:5px;background:#E9E7DF"></div>
<div class="a" style="left:5px;top:660px;width:1267px;height:1px;background:#FBFBF4"></div>
<div class="a" style="left:5px;top:666px;width:1267px;height:1px;background:#111"></div>
<div class="a" style="left:5px;top:667px;width:1267px;height:1px;background:#F8F6EC"></div>
<!-- command grip -->
<div class="a" style="left:11px;top:675px;width:2px;height:58px;border-left:1px solid #fff;border-right:1px solid #B6B19C"></div>
<div class="a" style="left:15px;top:675px;width:2px;height:58px;border-left:1px solid #fff;border-right:1px solid #B6B19C"></div>
<!-- command box -->
<div class="a" style="left:21px;top:672px;width:1250px;height:66px;background:#fff;border-top:1px solid #111;border-left:1px solid #111;box-shadow:inset 1px 1px 0 #D8D8D8"></div>
<div class="a" style="left:23px;top:720px;width:1248px;height:1px;background:#A4A4A4"></div>
<div class="a cmdc" style="left:23px;top:673px">命令</div>
<div class="a cmd" style="left:55px;top:673px">:</div>
<div class="a cmdc" style="left:23px;top:686px">命令</div>
<div class="a cmd" style="left:55px;top:686px">:</div>
<div class="a cmdc" style="left:23px;top:699px">命令</div>
<div class="a cmd" style="left:55px;top:699px">:</div>
<div class="a cmdc" style="left:23px;top:722px">命令</div>
<div class="a cmd" style="left:55px;top:722px">:</div>
<div class="a cmd" style="left:70px;top:699px">_erase</div>
<div class="a cmdc" style="left:126px;top:699px">找到</div>
<div class="a cmd" style="left:167px;top:699px">3</div>
<div class="a cmdc" style="left:183px;top:699px">个</div>
<!-- status bar -->
<div class="a" style="left:21px;top:738px;width:1250px;height:1px;background:#A0A0A0"></div>
<div class="a" style="left:5px;top:739px;width:1267px;height:1px;background:#fff"></div>
<div class="a" style="left:5px;top:740px;width:1267px;height:1px;background:#B8B5A4"></div>
<div class="a" style="left:9px;top:743px;width:250px;height:18px;border:1px solid;border-color:#ACA899 #fff #fff #ACA899"></div>
<div class="a" style="left:11px;top:746px;font:10px/14px 'Liberation Mono',monospace;white-space:pre;transform:scaleY(1.15);transform-origin:0 0">822.2510, 437.4706, 0.0000</div>
<div class="a st" style="left:263px;width:28px">捕捉</div>
<div class="a st" style="left:295px;width:28px">栅格</div>
<div class="a st" style="left:327px;width:28px">正交</div>
<div class="a st" style="left:359px;width:28px">极轴</div>
<div class="a st stp" style="left:391px;width:53px">对象捕捉</div>
<div class="a st stp" style="left:447px;width:53px">对象追踪</div>
<div class="a st" style="left:504px;width:27px">线宽</div>
<div class="a st stp" style="left:535px;width:28px">模型</div>
<!-- status right icons -->
<svg class="a" style="left:1215px;top:743px" width="58" height="18">
<path d="M4,3 L12,10" stroke="#5A7AB8" stroke-width="1.5"/>
<path d="M12,3 L4,14 H20 Z" fill="#F5D800" stroke="#7A6A00"/>
<path d="M12,7 V11 M12,12.5 V13.5" stroke="#000" stroke-width="1.6"/>
<path d="M30,9 H37 L33.5,12.5 Z" fill="#000"/>
<path d="M52,14 h2v2h-2z M48,14 h2v2h-2z M52,10 h2v2h-2z" fill="#B6B19C"/>
</svg>
<!-- balloon -->
<svg class="a" style="left:1080px;top:655px" width="195" height="96">
<path d="M17.5,3.5 H175 Q188.5,3.5 188.5,17 V63 Q188.5,76.5 175,76.5 H146 L146,93 L130,76.5 H18 Q4.5,76.5 4.5,63 V17 Q4.5,3.5 17.5,3.5 Z" fill="#FFFFE1" stroke="#000" stroke-width="1.3"/>
<circle cx="22" cy="20" r="7" fill="#E8F0FA" stroke="#7A9ACA"/>
<text x="19.5" y="24.5" font-family="Liberation Serif" font-weight="bold" font-size="11" fill="#1A4A9A">i</text>
<rect x="164.5" y="13.5" width="15" height="15" fill="#F3F1E4" stroke="#B8B4A0"/>
<path d="M168.5,17.5 L175.5,24.5 M175.5,17.5 L168.5,24.5" stroke="#000" stroke-width="2"/>
</svg>
<div class="a" style="left:1120px;top:666px;font:bold 12px/14px 'Liberation Sans',sans-serif">通信中心</div>
<div class="a" style="left:1100px;top:688px;font:12px/14px 'Liberation Sans',sans-serif">使软件保持最新的简单方法。</div>
<div class="a" style="left:1100px;top:706px;font:12px/14px 'Liberation Sans',sans-serif;color:#0000FF;text-decoration:underline">单击此处。</div>
<!-- taskbar -->
<div id="taskbar" class="a"></div>
<div class="a" style="left:0;top:766px;width:94px;height:29px;border-radius:0 12px 12px 0;background:linear-gradient(#3C9A3C,#4FB24F 15%,#379B37 50%,#2E8A2E 85%,#2A7A2A)"></div>
<svg class="a" style="left:9px;top:771px" width="20" height="19">
<path d="M1,3 Q5,1 9,3 V9 Q5,7 1,9 Z" fill="#F2572A"/>
<path d="M10,3 Q14,5 18,3 V9 Q14,11 10,9 Z" fill="#7FBA00"/>
<path d="M1,10 Q5,8 9,10 V16 Q5,14 1,16 Z" fill="#4A8AF4"/>
<path d="M10,10 Q14,12 18,10 V16 Q14,18 10,16 Z" fill="#FFC400"/>
</svg>
<div class="a" style="left:34px;top:770px;font:italic 18px/22px 'Liberation Sans',sans-serif;color:#fff;text-shadow:1px 1px 1px #1A4A1A">开始</div>
<svg class="a" style="left:104px;top:770px" width="90" height="22">
<circle cx="11" cy="11" r="7.5" fill="#3FB8E8" stroke="#E8F8FF" stroke-width="1.5"/>
<text x="7.5" y="15" font-family="Liberation Sans" font-weight="bold" font-size="10" fill="#fff">K</text>
<rect x="26.5" y="3.5" width="13" height="14" rx="3" fill="#E8F0FA" stroke="#1A4A9A" stroke-width="1.3"/><path d="M29,14 L37,6 M30,8 H34" stroke="#2A6AC8" stroke-width="1.6"/><circle cx="33" cy="11" r="3" fill="none" stroke="#2A5AAA" stroke-width="1.2"/>
<ellipse cx="56" cy="8" rx="5" ry="6" fill="#151515"/><ellipse cx="56" cy="12" rx="4" ry="4.5" fill="#fff"/><circle cx="54.2" cy="5.5" r="1.3" fill="#fff"/><circle cx="57.8" cy="5.5" r="1.3" fill="#fff"/><path d="M54,8 H58 L56,9.5Z" fill="#F5A000"/><path d="M51.5,10 Q56,12 60.5,10 V11.5 Q56,13.5 51.5,11.5Z" fill="#E02020"/><path d="M51,16.5 H55 M57,16.5 H61" stroke="#F5A000" stroke-width="1.6"/>
<path d="M78,3 L81,6 L78,9 M82,3 L85,6 L82,9" fill="none" stroke="#BFD8FF" stroke-width="1.2"/>
</svg>
<div class="a tk" style="left:197px;width:157px;padding-left:28px">一个思考题大家帮...</div>
<svg class="a" style="left:203px;top:772px" width="20" height="20"><text x="3" y="16" font-family="Liberation Sans" font-weight="bold" font-size="18" fill="#3FA4F4" stroke="#D8F0FF" stroke-width="0.9">e</text><path d="M2,17 Q1,12 8,6 Q15,1 18,3" fill="none" stroke="#E8B830" stroke-width="1.6"/></svg>
<div class="a tk" style="left:357px;width:158px;padding-left:29px">今日要闻 腾讯网</div>
<svg class="a" style="left:364px;top:773px" width="18" height="18"><circle cx="9" cy="9" r="7" fill="#fff" stroke="#E0A020" stroke-width="2"/><circle cx="9" cy="9" r="3.5" fill="#2A8AD8"/><path d="M3,7 L9,3" stroke="#E03030" stroke-width="2"/><path d="M12,14 L16,9" stroke="#40A040" stroke-width="2"/></svg>
<div class="a tk" style="left:517px;width:158px;padding-left:30px;background:linear-gradient(#1E4FC0,#1F54CB);box-shadow:inset 1px 1px 0 #15379A,inset -1px -1px 0 #3A70E0;font-family:'Liberation Mono',monospace;font-size:9.8px;line-height:26px">AutoCAD 2004 - [...</div>
<div class="a" style="left:526px;top:774px;width:16px;height:16px;background:#1A7A8A;border:1px solid #A8E8F0"></div>
<div class="a" style="left:529px;top:772px;font:bold 14px/16px 'Liberation Sans',sans-serif;color:#fff">a</div>
<!-- lang bar -->
<div class="a" style="left:1037px;top:775px;font:11px/12px 'Liberation Mono',monospace;color:#fff">CH</div>
<div class="a" style="left:1059px;top:772px;font:bold 16px/16px 'Liberation Serif',serif;color:#fff">A</div>
<svg class="a" style="left:1080px;top:772px" width="40" height="20">
<rect x="2.5" y="5.5" width="8" height="8" rx="2" fill="none" stroke="#fff"/><path d="M6,10 L12,4 M9,4 H12 V7" stroke="#fff" stroke-width="1.2" fill="none"/>
<rect x="24.5" y="2.5" width="7" height="4" fill="none" stroke="#fff"/><rect x="22.5" y="4.5" width="7" height="4" fill="#2A5AD8" stroke="#fff"/>
<path d="M23,13 H29 L26,16 Z" fill="#fff"/>
</svg>
<!-- tray -->
<div class="a" style="left:1130px;top:766px;width:147px;height:29px;background:linear-gradient(#1690EA,#19A0F4 10%,#1591EA 50%,#0E86E0);border-left:1px solid #1A3A9A"></div>
<svg class="a" style="left:1136px;top:772px" width="94" height="20">
<ellipse cx="11" cy="8" rx="5" ry="6" fill="#151515"/><ellipse cx="11" cy="12" rx="4" ry="4.5" fill="#fff"/><circle cx="9.2" cy="5.5" r="1.3" fill="#fff"/><circle cx="12.8" cy="5.5" r="1.3" fill="#fff"/><path d="M9,8 H13 L11,9.5Z" fill="#F5A000"/><path d="M6.5,10 Q11,12 15.5,10 V11.5 Q11,13.5 6.5,11.5Z" fill="#E02020"/><path d="M6,16.5 H10 M12,16.5 H16" stroke="#F5A000" stroke-width="1.6"/>
<rect x="23.5" y="6.5" width="7" height="7" fill="#3A3A7A" stroke="#C8D0F0"/><rect x="28.5" y="2.5" width="7" height="7" fill="#3A3A7A" stroke="#C8D0F0"/><path d="M23,15 h8 M28,11 h8" stroke="#E8E8F8" stroke-width="1.5"/>
<rect x="42.5" y="4.5" width="8" height="7" fill="#3A3A7A" stroke="#C8D0F0"/><path d="M42,13 h8" stroke="#E8E8F8" stroke-width="1.5"/><path d="M52,3 Q55,7 52,11 M55,1 Q59,7 55,13" stroke="#E8F0FF" fill="none"/><path d="M49,13 L55,18 M55,13 L49,18" stroke="#E02020" stroke-width="1.8"/>
<circle cx="66" cy="9" r="5.5" fill="#5A5A5A" stroke="#B8B8C8" stroke-width="1.2"/><circle cx="65" cy="8" r="2" fill="#C8C8C8"/><path d="M68,16 Q73,14 73,9" stroke="#C8D8FF" fill="none"/>
<path d="M79,3 L85,1 L91,3 V10 Q85,17 79,10 Z" fill="#6AC83A" stroke="#D8F8C8"/><path d="M85,4.5 V12 M81.5,8 H88.5" stroke="#fff" stroke-width="2"/>
</svg>
<div class="a" style="left:1234px;top:775px;font:12px/12px 'Liberation Sans',sans-serif;color:#fff">10:42</div>

</body></html>
